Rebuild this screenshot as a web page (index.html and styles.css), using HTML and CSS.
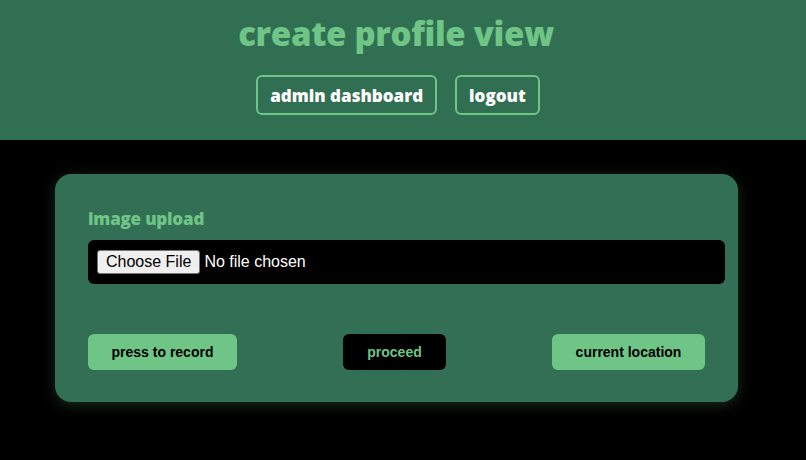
FILE: index.html
```html
<!DOCTYPE html>
<html>
<head>
<meta charset="utf-8">
<link rel="stylesheet" href="styles.css">
</head>
<body>
<div class="page">
  <header class="top">
    <h1 class="title">create profile view</h1>
    <nav class="nav">
      <a class="nav-btn" href="#">admin dashboard</a>
      <a class="nav-btn" href="#">logout</a>
    </nav>
  </header>
  <main class="main">
    <section class="card">
      <label class="label">image upload</label>
      <div class="file-box">
        <input class="file" type="file">
      </div>
      <div class="actions">
        <button class="btn btn-light">press to record</button>
        <button class="btn btn-dark">proceed</button>
        <button class="btn btn-light">current location</button>
      </div>
    </section>
  </main>
</div>
</body>
</html>
```
FILE: styles.css
```css
html, body {
  margin: 0;
  padding: 0;
  background: #000;
  height: 100%;
}
.page {
  width: 792px;
  font-family: "Open Sans", "Liberation Sans", sans-serif;
}
.top {
  background: #316f53;
  height: 140px;
  box-sizing: border-box;
  padding-top: 14px;
  display: flex;
  flex-direction: column;
  align-items: center;
  width: 806px;
  padding-right: 14px;
}
.title {
  margin: 0;
  color: #6fc586;
  font-size: 33px;
  font-weight: 800;
  line-height: 40px;
  letter-spacing: -0.3px;
}
.nav {
  display: flex;
  gap: 18px;
  margin-top: 21px;
  padding-left: 4px;
}
.nav-btn {
  display: flex;
  align-items: center;
  justify-content: center;
  height: 40px;
  box-sizing: border-box;
  padding: 0 12px;
  border: 2px solid #6fc586;
  border-radius: 6px;
  color: #fff;
  text-decoration: none;
  font-weight: 800;
  font-size: 17px;
}
.main {
  padding: 34px 0 0 55px;
}
.card {
  width: 683px;
  height: 228px;
  box-sizing: border-box;
  background: #336f55;
  border-radius: 16px;
  padding: 34px 33px 0 33px;
  box-shadow: 0 3px 14px rgba(111, 197, 134, 0.22);
  display: flex;
  flex-direction: column;
}
.label {
  color: #6fc586;
  font-weight: 800;
  font-size: 17px;
  line-height: 22px;
  letter-spacing: -0.2px;
}
.file-box {
  margin-top: 10px;
  width: 637px;
  height: 44px;
  box-sizing: border-box;
  background: #000;
  border-radius: 6px;
  padding: 0 9px;
  display: flex;
  align-items: center;
}
.file {
  color: #fff;
  font-family: "Liberation Sans", Arial, sans-serif;
  font-size: 16px;
}
.file::file-selector-button {
  font-family: "Liberation Sans", Arial, sans-serif;
  font-size: 16px;
  background: #efefef;
  color: #000;
  border: 1px solid #767676;
  border-radius: 3px;
  height: 24px;
  padding: 0 8px;
  margin-right: 4px;
}
.actions {
  margin-top: 50px;
  display: flex;
  justify-content: space-between;
}
.btn {
  height: 36px;
  border: none;
  border-radius: 6px;
  font-family: "Liberation Sans", Arial, sans-serif;
  font-weight: 700;
  font-size: 14px;
  padding: 0;
}
.btn-light {
  background: #6fc586;
  color: #000;
  width: 149px;
}
.btn-light:last-child {
  width: 153px;
}
.btn-dark {
  background: #000;
  color: #6fc586;
  width: 103px;
}
```
